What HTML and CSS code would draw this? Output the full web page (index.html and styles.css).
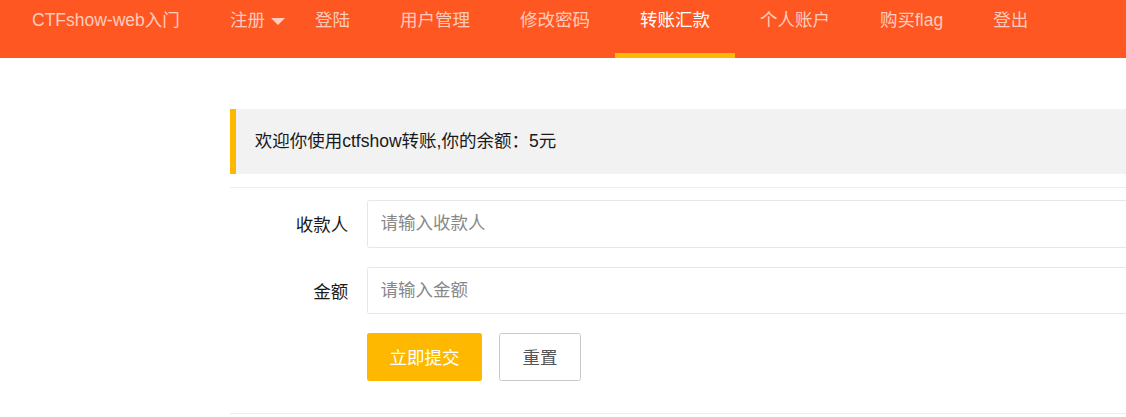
FILE: index.html
```html
<!DOCTYPE html>
<html lang="zh-CN">
<head>
<meta charset="utf-8">
<title>转账汇款</title>
<link rel="stylesheet" href="styles.css">
</head>
<body>
<header class="header">
  <div class="logo">CTFshow-web入门</div>
  <ul class="nav">
    <li class="nav-item has-more">注册<span class="more"></span></li>
    <li class="nav-item">登陆</li>
    <li class="nav-item">用户管理</li>
    <li class="nav-item">修改密码</li>
    <li class="nav-item active">转账汇款</li>
    <li class="nav-item">个人账户</li>
    <li class="nav-item">购买flag</li>
    <li class="nav-item">登出</li>
  </ul>
</header>
<main class="main">
  <blockquote class="quote">欢迎你使用ctfshow转账,你的余额：5元</blockquote>
  <hr class="rule">
  <form class="form">
    <div class="form-item">
      <label class="form-label">收款人</label>
      <input class="input" type="text" placeholder="请输入收款人">
    </div>
    <div class="form-item">
      <label class="form-label">金额</label>
      <input class="input" type="text" placeholder="请输入金额">
    </div>
    <div class="form-item buttons">
      <button type="button" class="btn btn-warm">立即提交</button>
      <button type="button" class="btn btn-primary">重置</button>
    </div>
  </form>
  <hr class="rule">
</main>
</body>
</html>
```
FILE: styles.css
```css
html, body {
  margin: 0;
  padding: 0;
  overflow: hidden;
  background: #fff;
}
body {
  font-family: "Liberation Sans", "Noto Sans CJK SC", sans-serif;
  font-size: 17.5px;
  color: #222;
}
.header {
  display: flex;
  height: 58px;
  background: #ff5722;
}
.logo {
  width: 205px;
  box-sizing: border-box;
  padding-left: 32px;
  line-height: 41px;
  color: rgba(255, 255, 255, 0.7);
  white-space: nowrap;
}
.nav {
  display: flex;
  margin: 0;
  padding: 0;
  list-style: none;
}
.nav-item {
  position: relative;
  padding: 0 25px;
  line-height: 41px;
  height: 58px;
  color: rgba(255, 255, 255, 0.7);
  white-space: nowrap;
}
.nav-item.active {
  color: #fff;
}
.nav-item.active::after {
  content: "";
  position: absolute;
  left: 0;
  right: 0;
  bottom: 0;
  height: 5px;
  background: #ffb800;
}
.more {
  position: absolute;
  right: 5px;
  top: 18px;
  width: 0;
  height: 0;
  border-left: 7px solid transparent;
  border-right: 7px solid transparent;
  border-top: 7px solid rgba(255, 255, 255, 0.7);
}
.main {
  margin: 51px 0 0 230px;
  overflow: hidden;
}
.quote {
  margin: 0 -10px 12.5px 0;
  padding: 18.75px;
  line-height: 27.5px;
  background: #f2f2f2;
  border-left: 6px solid #ffb800;
  color: #1a1a1a;
}
.rule {
  margin: 0;
  border: 0;
  height: 1px;
  background: #eee;
}
.form {
  padding-top: 12.5px;
  padding-bottom: 13px;
}
.form-item {
  display: flex;
  align-items: center;
  margin-bottom: 19px;
}
.form-label {
  width: 137px;
  box-sizing: border-box;
  padding: 0 18.75px;
  text-align: right;
  color: #1a1a1a;
}
.input {
  flex: 1;
  height: 47.5px;
  margin-right: -10px;
  box-sizing: border-box;
  padding: 0 12.5px;
  border: 1px solid #e6e6e6;
  border-radius: 2.5px;
  font-family: inherit;
  font-size: 17.5px;
  color: #333;
  outline: none;
}
.input::placeholder {
  color: #888;
}
.buttons {
  padding-left: 137px;
  gap: 17px;
}
.btn {
  height: 47.5px;
  padding: 0 22.5px;
  border-radius: 2.5px;
  font-family: inherit;
  font-size: 17.5px;
  cursor: pointer;
}
.btn-warm {
  background: #ffb800;
  color: #fff;
  border: 0;
}
.btn-primary {
  background: #fff;
  color: #555;
  border: 1px solid #c9c9c9;
}
```
